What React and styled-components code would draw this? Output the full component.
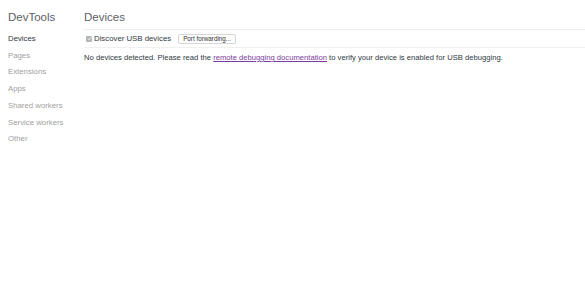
import styled, { createGlobalStyle } from "styled-components";

const Global = createGlobalStyle`
  html, body {
    margin: 0;
    background: #fff;
  }
  body {
    font-family: "Liberation Sans", Arial, sans-serif;
    color: #303942;
  }
`;

const Page = styled.div`
  display: flex;
  width: 585px;
  height: 300px;
  overflow: hidden;
`;

const Sidebar = styled.div`
  width: 84px;
  flex-shrink: 0;
  padding: 9px 0 0 8px;
  box-sizing: border-box;
`;

const Title = styled.div`
  font-size: 11.5px;
  color: #5c6166;
  height: 22px;
  line-height: 16px;
`;

const NavItem = styled.div`
  font-size: 7.8px;
  line-height: 16.7px;
  color: ${(p) => (p.$active ? "#303942" : "#a0a0a0")};
`;

const Main = styled.div`
  flex: 1;
  padding-top: 9px;
`;

const Header = styled.div`
  border-bottom: 1px solid #eee;
  height: 20px;
  line-height: 16px;
  font-size: 11.5px;
  color: #5c6166;
`;

const Toolbar = styled.div`
  display: flex;
  align-items: center;
  height: 17px;
  border-bottom: 1px solid #f0f0f0;
  font-size: 7.8px;
  padding-left: 2px;
`;

const Check = styled.span`
  width: 6px;
  height: 6px;
  border-radius: 1px;
  background: #b5b5b5;
  display: inline-flex;
  align-items: center;
  justify-content: center;
  margin-right: 2px;
`;

const Button = styled.button`
  font-family: inherit;
  font-size: 6.3px;
  color: #333;
  background: #fff;
  border: 1px solid #d6d6d6;
  border-radius: 2px;
  height: 10px;
  padding: 0 4px;
  margin-left: 7px;
  line-height: 8px;
`;

const Message = styled.div`
  font-size: 7.65px;
  padding-top: 5px;
  color: #303942;
`;

const Link = styled.a`
  color: #7b3d9c;
  text-decoration: underline;
`;

const items = ["Devices", "Pages", "Extensions", "Apps", "Shared workers", "Service workers", "Other"];

export default function App() {
  return (
    <Page>
      <Global />
      <Sidebar>
        <Title>DevTools</Title>
        {items.map((it, i) => (
          <NavItem key={it} $active={i === 0}>{it}</NavItem>
        ))}
      </Sidebar>
      <Main>
        <Header>Devices</Header>
        <Toolbar>
          <Check>
            <svg width="5" height="5" viewBox="0 0 10 10">
              <path d="M2 5.2 L4.2 7.4 L8.2 2.6" fill="none" stroke="#fff" strokeWidth="1.8" />
            </svg>
          </Check>
          Discover USB devices
          <Button>Port forwarding...</Button>
        </Toolbar>
        <Message>
          No devices detected. Please read the <Link href="#">remote debugging documentation</Link> to verify your device is enabled for USB debugging.
        </Message>
      </Main>
    </Page>
  );
}
